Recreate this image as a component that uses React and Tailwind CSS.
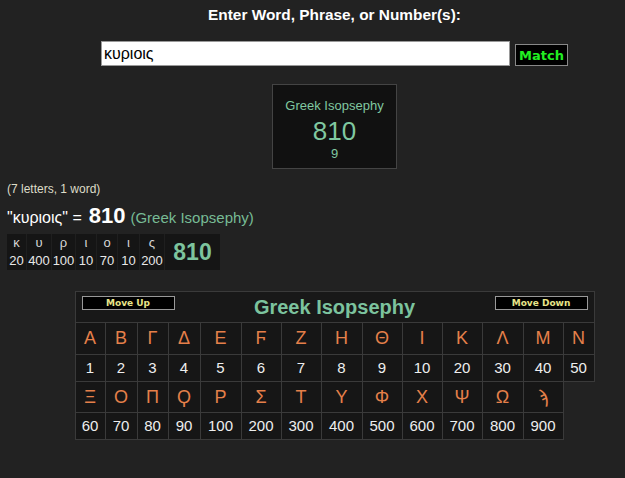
const letters1 = ['Α','Β','Γ','Δ','Ε','Ϝ','Ζ','Η','Θ','Ι','Κ','Λ','Μ','Ν'];
const nums1 = ['1','2','3','4','5','6','7','8','9','10','20','30','40','50'];
const letters2 = ['Ξ','Ο','Π','Ϙ','Ρ','Σ','Τ','Υ','Φ','Χ','Ψ','Ω','ϡ'];
const nums2 = ['60','70','80','90','100','200','300','400','500','600','700','800','900'];
const widths = ['w-[31px] border-l','w-[32px]','w-[31px]','w-[32px]','w-[41px]','w-[40px]','w-[40px]','w-[41px]','w-[40px]','w-[40px]','w-[40px]','w-[41px]','w-[40px]','w-[31px]'];

const smallLetters = ['κ','υ','ρ','ι','ο','ι','ς'];
const smallNums = ['20','400','100','10','70','10','200'];
const smallW = ['w-[20px]','w-[25px]','w-[24px]','w-[21px]','w-[21px]','w-[22px]','w-[25px]'];

function Row({ items, h, letter }) {
  return (
    <div className={`flex ${h}`}>
      {items.map((t, i) => (
        <div
          key={i}
          className={`${widths[i]} border-r border-b border-[#3a3a3a] bg-[#161616] flex items-center justify-center ${letter ? 'text-[18px] text-[#e5804a]' : 'text-[15px] text-[#eeeeee]'}`}
        >
          {t}
        </div>
      ))}
    </div>
  );
}

export default function App() {
  return (
    <div className="w-[625px] h-[478px] overflow-hidden bg-[#222222] font-['Liberation_Sans','DejaVu_Sans',sans-serif]">
      <div className="w-[669px] px-[7px]">
        <div className="pt-[6px] text-center text-[15.4px] leading-[18px] font-bold text-white">
          Enter Word, Phrase, or Number(s):
        </div>
        <div className="mt-[17px] flex justify-center items-end gap-[5px]">
          <input
            defaultValue="κυριοις"
            className="w-[409px] h-[25px] bg-white border border-[#999] px-[2px] text-[16px] text-black outline-none font-['Liberation_Sans','DejaVu_Sans',sans-serif]"
          />
          <button className="w-[53px] h-[22px] bg-black border border-[#888] text-[#22ee22] font-bold text-[13px] leading-none font-['DejaVu_Sans',sans-serif] flex items-center justify-center">
            Match
          </button>
        </div>
        <div className="mt-[18px] mx-auto w-[125px] h-[85px] bg-[#111111] border border-[#444444] flex flex-col items-center text-[#80c8a0]">
          <div className="pt-[12px] text-[13px] leading-[17px]">Greek Isopsephy</div>
          <div className="mt-[4px] text-[26px] leading-[27px]">810</div>
          <div className="mt-[1px] text-[13px] leading-[15px]">9</div>
        </div>
        <div className="mt-[12px] text-[12px] leading-[16px] text-[#dddcc8]">(7 letters, 1 word)</div>
        <div className="mt-[2px] h-[28px] flex items-baseline text-white">
          <span className="text-[16px]">"κυριοις" = </span>
          <span className="ml-[7px] text-[22px] font-bold">810</span>
          <span className="ml-[5px] text-[15px] text-[#77bb95]">(Greek Isopsephy)</span>
        </div>
        <div className="mt-[7px] flex bg-[#1c1c1c] w-[213px]">
          {smallLetters.map((l, i) => (
            <div key={i} className={`${smallW[i]} flex flex-col border-r border-[#1f1f1f]`}>
              <div className="h-[17px] bg-[#151515] flex items-center justify-center text-[13px] text-[#d8d8d8]">{l}</div>
              <div className="h-[19px] bg-[#151515] flex items-center justify-center text-[13px] text-[#e8e8e8]">{smallNums[i]}</div>
            </div>
          ))}
          <div className="flex-1 bg-[#151515] flex items-center justify-center text-[23px] font-bold text-[#7dc49d]">810</div>
        </div>
        <div className="mt-[21px] mx-auto w-[520px]">
          <div className="h-[32px] border border-[#3a3a3a] bg-[#181818] grid grid-cols-[93px_1fr_93px] px-[6px]">
            <div className="mt-[4px] h-[14px] bg-black border border-[#999] text-[9px] font-bold text-[#e8e58a] font-['DejaVu_Sans',sans-serif] flex items-center justify-center leading-none">Move Up</div>
            <div className="mt-[3px] text-center text-[20px] leading-[24px] font-bold text-[#7cc39e]">Greek Isopsephy</div>
            <div className="mt-[4px] h-[14px] bg-black border border-[#999] text-[9px] font-bold text-[#e8e58a] font-['DejaVu_Sans',sans-serif] flex items-center justify-center leading-none">Move Down</div>
          </div>
          <Row items={letters1} h="h-[32px]" letter />
          <Row items={nums1} h="h-[27px]" />
          <Row items={letters2} h="h-[31px]" letter />
          <Row items={nums2} h="h-[27px]" />
        </div>
      </div>
    </div>
  );
}
